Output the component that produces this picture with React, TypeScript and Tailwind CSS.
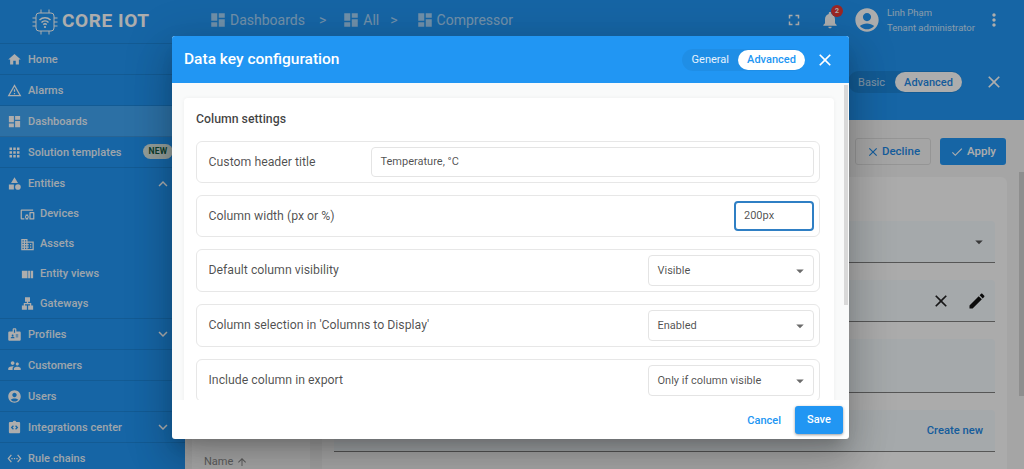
import React from "react";

const P = {
  home: "M10 20v-6h4v6h5v-8h3L12 3 2 12h3v8z",
  warn: "M12 5.99 19.53 19H4.47L12 5.99M12 2 1 21h22L12 2zm1 14h-2v2h2v-2zm0-6h-2v4h2v-4z",
  dash: "M3 13h8V3H3v10zm0 8h8v-6H3v6zm10 0h8V11h-8v10zm0-18v6h8V3h-8z",
  apps: "M4 8h4V4H4v4zm6 12h4v-4h-4v4zm-6 0h4v-4H4v4zm0-6h4v-4H4v4zm6 0h4v-4h-4v4zm6-10v4h4V4h-4zm-6 4h4V4h-4v4zm6 6h4v-4h-4v4zm0 6h4v-4h-4v4z",
  cat: "M12 2 6.5 11h11L12 2zM17.5 13a4.5 4.5 0 1 0 0 9 4.5 4.5 0 0 0 0-9zM3 13.5h8v8H3z",
  dev: "M3 6h18V4H3c-1.1 0-2 .9-2 2v12c0 1.1.9 2 2 2h4v-2H3V6zm10 6H9v1.78c-.61.55-1 1.33-1 2.22s.39 1.67 1 2.22V20h4v-1.78c.61-.55 1-1.34 1-2.22s-.39-1.67-1-2.22V12zm-2 5.5c-.83 0-1.5-.67-1.5-1.5s.67-1.5 1.5-1.5 1.5.67 1.5 1.5-.67 1.5-1.5 1.5zM22 8h-6c-.5 0-1 .5-1 1v10c0 .5.5 1 1 1h6c.5 0 1-.5 1-1V9c0-.5-.5-1-1-1zm-1 10h-4v-8h4v8z",
  dom: "M12 7V3H2v18h20V7H12zM6 19H4v-2h2v2zm0-4H4v-2h2v2zm0-4H4V9h2v2zm0-4H4V5h2v2zm4 12H8v-2h2v2zm0-4H8v-2h2v2zm0-4H8V9h2v2zm0-4H8V5h2v2zm10 12h-8v-2h2v-2h-2v-2h2v-2h-2V9h8v10zm-2-8h-2v2h2v-2zm0 4h-2v2h2v-2z",
  view: "M3 6h9v12H3zM13 6h3.5v12H13zM17.5 6H21v12h-3.5z",
  lan: "M13 22h8v-7h-3v-4h-5V9h3V2H8v7h3v2H6v4H3v7h8v-7H8v-2h8v2h-3z",
  badge: "M20 7h-5V4c0-1.1-.9-2-2-2h-2c-1.1 0-2 .9-2 2v3H4c-1.1 0-2 .9-2 2v11c0 1.1.9 2 2 2h16c1.1 0 2-.9 2-2V9c0-1.1-.9-2-2-2zM9 12c.83 0 1.5.67 1.5 1.5S9.83 15 9 15s-1.5-.67-1.5-1.5S8.17 12 9 12zm3 6H6v-.75c0-1 2-1.5 3-1.5s3 .5 3 1.5V18zm1-9h-2V4h2v5zm5 7.5h-4V15h4v1.5zm0-3h-4V12h4v1.5z",
  sup: "M16.5 12c1.38 0 2.49-1.12 2.49-2.5S17.88 7 16.5 7C15.12 7 14 8.12 14 9.5s1.12 2.5 2.5 2.5zM9 11c1.66 0 2.99-1.34 2.99-3S10.66 5 9 5C7.34 5 6 6.34 6 8s1.34 3 3 3zm7.5 3c-1.83 0-5.5.92-5.5 2.75V19h11v-2.25c0-1.83-3.67-2.75-5.5-2.75zM9 13c-2.33 0-7 1.17-7 3.5V19h7v-2.25c0-.85.33-2.34 2.37-3.47C10.5 13.1 9.66 13 9 13z",
  acc: "M12 2C6.48 2 2 6.48 2 12s4.48 10 10 10 10-4.48 10-10S17.52 2 12 2zm0 4c1.93 0 3.5 1.57 3.5 3.5S13.93 13 12 13s-3.5-1.57-3.5-3.5S10.07 6 12 6zm0 14c-2.03 0-4.43-.82-6.14-2.88C7.55 15.8 9.68 15 12 15s4.45.8 6.14 2.12C16.43 19.18 14.03 20 12 20z",
  integ: "M19 3h-4.18C14.4 1.84 13.3 1 12 1s-2.4.84-2.82 2H5c-1.1 0-2 .9-2 2v14c0 1.1.9 2 2 2h14c1.1 0 2-.9 2-2V5c0-1.1-.9-2-2-2zM11 14.17 9.59 15.59 6 12l3.59-3.59L11 9.83 8.83 12 11 14.17zm3.41 1.42L13 14.17 15.17 12 13 9.83l1.41-1.42L18 12l-3.59 3.59z",
  eth: "M7.77 6.76 6.23 5.48.82 12l5.41 6.52 1.54-1.28L3.42 12l4.35-5.24zM7 13h2v-2H7v2zm10-2h-2v2h2v-2zm-6 2h2v-2h-2v2zm6.77-7.52-1.54 1.28L20.58 12l-4.35 5.24 1.54 1.28L23.18 12l-5.41-6.52z",
  full: "M7 14H5v5h5v-2H7v-3zm-2-4h2V7h3V5H5v5zm12 7h-3v2h5v-5h-2v3zM14 5v2h3v3h2V5h-5z",
  bell: "M12 22c1.1 0 2-.9 2-2h-4c0 1.1.89 2 2 2zm6-6v-5c0-3.07-1.64-5.64-4.5-6.32V4c0-.83-.67-1.5-1.5-1.5s-1.5.67-1.5 1.5v.68C7.63 5.36 6 7.92 6 11v5l-2 2v1h16v-1l-2-2z",
  more: "M12 8c1.1 0 2-.9 2-2s-.9-2-2-2-2 .9-2 2 .9 2 2 2zm0 2c-1.1 0-2 .9-2 2s.9 2 2 2 2-.9 2-2-.9-2-2-2zm0 6c-1.1 0-2 .9-2 2s.9 2 2 2 2-.9 2-2-.9-2-2-2z",
  close: "M19 6.41 17.59 5 12 10.59 6.41 5 5 6.41 10.59 12 5 17.59 6.41 19 12 13.41 17.59 19 19 17.59 13.41 12z",
  check: "M9 16.17 4.83 12l-1.42 1.41L9 19 21 7l-1.41-1.41z",
  edit: "M3 17.25V21h3.75L17.81 9.94l-3.75-3.75L3 17.25zM20.71 7.04c.39-.39.39-1.02 0-1.41l-2.34-2.34c-.39-.39-1.02-.39-1.41 0l-1.83 1.83 3.75 3.75 1.83-1.83z",
  down: "M16.59 8.59 12 13.17 7.41 8.59 6 10l6 6 6-6z",
  up: "M12 8l-6 6 1.41 1.41L12 10.83l4.59 4.58L18 14z",
  arrowUp: "M4 12l1.41 1.41L11 7.83V20h2V7.83l5.58 5.59L20 12l-8-8-8 8z",
  caret: "M7 10l5 5 5-5z",
};

function Icon({ d, className = "" }: { d: string; className?: string }) {
  return (
    <svg viewBox="0 0 24 24" fill="currentColor" fillRule="evenodd" className={"shrink-0 " + className}>
      <path d={d} />
    </svg>
  );
}

function Logo() {
  return (
    <svg viewBox="0 0 28 28" fill="none" stroke="currentColor" strokeWidth="1" className="w-[28px] h-[28px] shrink-0">
      <rect x="5" y="5" width="18" height="18" rx="3" />
      <path d="M10 1.5V5M18 1.5V5M10 23v3.5M18 23v3.5M1.5 10H5M1.5 14H5M1.5 18H5M23 10h3.5M23 14h3.5M23 18h3.5" />
      <path strokeWidth="1.5" d="M8.5 12a8 8 0 0 1 11 0M10.5 14.5a5 5 0 0 1 7 0M12.3 16.6a2.5 2.5 0 0 1 3.4 0" />
      <circle cx="14" cy="19" r="1.1" fill="currentColor" stroke="none" />
    </svg>
  );
}

type Item = { label: string; d: string; sub?: boolean; chev?: "up" | "down"; active?: boolean; tag?: boolean };
const items: Item[] = [
  { label: "Home", d: P.home },
  { label: "Alarms", d: P.warn },
  { label: "Dashboards", d: P.dash, active: true },
  { label: "Solution templates", d: P.apps, tag: true },
  { label: "Entities", d: P.cat, chev: "up" },
  { label: "Devices", d: P.dev, sub: true },
  { label: "Assets", d: P.dom, sub: true },
  { label: "Entity views", d: P.view, sub: true },
  { label: "Gateways", d: P.lan, sub: true },
  { label: "Profiles", d: P.badge, chev: "down" },
  { label: "Customers", d: P.sup },
  { label: "Users", d: P.acc },
  { label: "Integrations center", d: P.integ, chev: "down" },
  { label: "Rule chains", d: P.eth },
];

function NavRow({ it, last }: { it: Item; last: boolean }) {
  const h = it.sub ? "h-[30px] pl-[20px] gap-[5px]" : "h-[31px] pl-[7px] gap-[6px]";
  const border = it.sub || it.label === "Entities" ? "" : "border-b border-[#000000]/10";
  const lastSub = it.label === "Gateways" ? "border-b border-[#000000]/10" : "";
  const textPad = it.sub ? "pt-[1px]" : "pt-[2px]";
  return (
    <div className={`relative flex items-center pr-[14px] shrink-0 ${h} ${last ? "" : border} ${lastSub} ${it.active ? "bg-[#ffffff]/15" : ""}`}>
      <Icon d={it.d} className="w-[15px] h-[15px]" />
      <span className={`text-[11px] font-medium tracking-[0.05px] whitespace-nowrap opacity-90 ${textPad}`}>{it.label}</span>
      {it.tag && (
        <span className="absolute left-[143px] top-[7px] h-[15px] w-[30px] rounded-full bg-[#dbe9e3] text-[#145c45] text-[8.5px] font-bold tracking-[0.3px] flex items-center justify-center">NEW</span>
      )}
      {it.chev && <Icon d={it.chev === "up" ? P.up : P.down} className="w-[18px] h-[18px] ml-auto mr-[-1px]" />}
    </div>
  );
}

function Sidebar() {
  return (
    <aside className="w-[185px] shrink-0 h-full bg-[#2196f3] text-[#ffffff] flex flex-col overflow-hidden">
      <div className="h-[44px] shrink-0 flex items-center pl-[31px] gap-[3px] border-b border-[#000000]/10">
        <Logo />
        <span className="text-[19px] font-bold tracking-[0.6px] whitespace-nowrap">CORE IOT</span>
      </div>
      {items.map((it, i) => (
        <NavRow key={it.label} it={it} last={i === items.length - 1} />
      ))}
    </aside>
  );
}

function Crumb({ label }: { label: string }) {
  return (
    <span className="flex items-center gap-[3px]">
      <Icon d={P.dash} className="w-[18px] h-[18px]" />
      <span className="text-[14px]">{label}</span>
    </span>
  );
}

function TopBar() {
  return (
    <header className="h-[40px] shrink-0 bg-[#2196f3] text-[#ffffff] flex items-center pl-[24px] pr-[20px]">
      <div className="flex items-center opacity-60">
        <Crumb label="Dashboards" />
        <span className="text-[14px] ml-[14px] mr-[16px]">&gt;</span>
        <Crumb label="All" />
        <span className="text-[14px] ml-[11px] mr-[18px]">&gt;</span>
        <Crumb label="Compressor" />
      </div>
      <div className="ml-auto flex items-center">
        <Icon d={P.full} className="w-[18px] h-[18px]" />
        <span className="relative ml-[17px]">
          <Icon d={P.bell} className="w-[20px] h-[20px]" />
          <span className="absolute -top-[5px] -right-[3px] w-[12px] h-[12px] rounded-full bg-[#e53935] text-[7px] font-bold flex items-center justify-center">2</span>
        </span>
        <Icon d={P.acc} className="w-[28px] h-[28px] ml-[13px]" />
        <div className="ml-[6px] w-[90px] leading-[15px]">
          <div className="text-[9.5px] opacity-75">Linh Phạm</div>
          <div className="text-[9.5px] opacity-75">Tenant administrator</div>
        </div>
        <Icon d={P.more} className="w-[20px] h-[20px] ml-[7px]" />
      </div>
    </header>
  );
}

function Field({ h, children }: { h: string; children?: React.ReactNode }) {
  return (
    <div className={`${h} bg-[#f3f9fd] border-b border-[#7f7f7f] rounded-t-[4px] flex items-center justify-end`}>
      {children}
    </div>
  );
}

function Editor() {
  return (
    <div className="flex-1 min-h-0 flex flex-col">
      <div className="h-[80px] shrink-0 bg-[#2196f3] text-[#ffffff] flex items-center justify-end pr-[20px] pt-[4px]">
        <div className="flex items-center rounded-full bg-[#000000]/10 h-[22px] pl-[10px]">
          <span className="text-[11px] opacity-70 mr-[10px] pt-[2px]">Basic</span>
          <span className="h-[20px] w-[67px] rounded-full bg-[#ffffff] text-[#1e88e5] text-[11px] font-medium flex items-center justify-center pt-[2px]">Advanced</span>
        </div>
        <Icon d={P.close} className="w-[20px] h-[20px] ml-[22px]" />
      </div>
      <div className="relative flex-1 min-h-0 bg-[#f4f4f4] flex flex-col">
        <div className="absolute right-0 top-[52px] w-[5px] h-[224px] bg-[#d2d2d2]" />
        <div className="h-[27px] mt-[18px] shrink-0 flex justify-end gap-[9px] pr-[18px]">
          <span className="w-[76px] rounded-[3px] border border-[#dcdcdc] text-[#1e88e5] text-[11.5px] font-medium flex items-center justify-center gap-[2px]">
            <Icon d={P.close} className="w-[14px] h-[14px]" />Decline
          </span>
          <span className="w-[66px] rounded-[3px] bg-[#2196f3] text-[#ffffff] text-[11.5px] font-medium flex items-center justify-center gap-[3px]">
            <Icon d={P.check} className="w-[14px] h-[14px]" />Apply
          </span>
        </div>
        <div className="flex-1 min-h-0 flex pl-[7px] pr-[17px] mt-[12px] gap-[12px]">
          <div className="w-[118px] bg-[#fcfcfc] rounded-t-[4px] flex flex-col justify-end pl-[12px]">
            <div className="flex items-center gap-[3px] text-[#8c8c8c] text-[11px] mb-[-1px]">
              Name
              <Icon d={P.arrowUp} className="w-[12px] h-[12px]" />
            </div>
          </div>
          <div className="flex-1 bg-[#fcfcfc] rounded-t-[6px] px-[12px] pt-[44px] flex flex-col">
            <Field h="h-[42px] mb-[17px] pr-[7px]">
              <Icon d={P.caret} className="w-[18px] h-[18px] text-[#555555]" />
            </Field>
            <Field h="h-[42px] mb-[17px] pr-[8px]">
              <Icon d={P.close} className="w-[20px] h-[20px] text-[#222222] mr-[16px]" />
              <Icon d={P.edit} className="w-[20px] h-[20px] text-[#111111]" />
            </Field>
            <Field h="h-[54px] mb-[17px]" />
            <Field h="h-[42px] pr-[12px]">
              <span className="text-[#1e88e5] text-[11.2px] font-medium pt-[2px]">Create new</span>
            </Field>
          </div>
        </div>
      </div>
    </div>
  );
}

function Row({ label, children }: { label: string; children: React.ReactNode }) {
  return (
    <div className="shrink-0 flex items-center justify-between pl-[11.5px] pr-[5px] border border-[#e7e7e7] rounded-[6px] py-[5px]">
      <span className="text-[12.3px] text-[#000000]/70 whitespace-nowrap">{label}</span>
      {children}
    </div>
  );
}

function Select({ value }: { value: string }) {
  return (
    <div className="w-[166px] h-[31px] border border-[#e4e4e4] rounded-[4px] flex items-center justify-between pl-[8.5px] pr-[4px] text-[11px] text-[#000000]/70">
      <span className="pt-[1px]">{value}</span>
      <Icon d={P.caret} className="w-[18px] h-[18px] text-[#6b6b6b]" />
    </div>
  );
}

function Dialog() {
  return (
    <div className="absolute left-[172px] top-[36px] w-[677px] h-[403px] bg-[#ffffff] rounded-[3px] shadow-[0_11px_15px_-7px_rgba(0,0,0,0.2),0_24px_38px_3px_rgba(0,0,0,0.14),0_9px_46px_8px_rgba(0,0,0,0.12)] flex flex-col overflow-hidden">
      <div className="h-[47px] shrink-0 bg-[#2196f3] text-[#ffffff] flex items-center pl-[12px] pr-[14px]">
        <h2 className="text-[15.5px] font-medium">Data key configuration</h2>
        <div className="ml-auto flex items-center h-[22px] rounded-full bg-[#000000]/5 pl-[10px] pt-[1px]">
          <span className="text-[11px] text-[#e6f2fd] mr-[9px]">General</span>
          <span className="h-[20px] w-[67px] rounded-full bg-[#ffffff] text-[#2196f3] text-[11px] font-medium flex items-center justify-center">Advanced</span>
        </div>
        <Icon d={P.close} className="w-[20px] h-[20px] ml-[10px]" />
      </div>
      <div className="relative h-[317px] shrink-0 bg-[#f9fafa] pl-[12px] pr-[15px] pt-[15px] overflow-hidden">
        <div className="absolute right-[1px] top-[2px] w-[4px] h-[220px] bg-[#d9d9d9]" />
        <div className="bg-[#ffffff] rounded-[4px] shadow-[0_0_4px_rgba(0,0,0,0.05)] pl-[12px] pr-[14px] pt-[13px] pb-[20px] flex flex-col gap-[12px]">
          <h3 className="text-[12.3px] font-medium text-[#000000]/75 leading-[16px] mb-[2px]">Column settings</h3>
          <Row label="Custom header title">
            <div className="w-[443px] h-[30px] border border-[#e4e4e4] rounded-[4px] flex items-center pl-[8.5px] text-[11px] text-[#000000]/70">Temperature, °C</div>
          </Row>
          <Row label="Column width (px or %)">
            <div className="w-[80px] h-[30px] border-2 border-[#2f7fc4] rounded-[4px] flex items-center pl-[8px] text-[11px] text-[#000000]/70">200px</div>
          </Row>
          <Row label="Default column visibility"><Select value="Visible" /></Row>
          <Row label="Column selection in 'Columns to Display'"><Select value="Enabled" /></Row>
          <Row label="Include column in export"><Select value="Only if column visible" /></Row>
        </div>
      </div>
      <div className="flex-1 flex items-center justify-end pr-[6px] gap-[14px]">
        <span className="text-[#2196f3] text-[11px] font-medium pt-[3px]">Cancel</span>
        <span className="w-[48px] h-[28px] rounded-[3px] bg-[#2196f3] text-[#ffffff] text-[11px] font-medium flex items-center justify-center pt-[2px] shadow-[0_1px_3px_rgba(0,0,0,0.4)]">Save</span>
      </div>
    </div>
  );
}

export default function App() {
  return (
    <div className="relative w-[1024px] h-[469px] overflow-hidden bg-[#ffffff] font-['Roboto',sans-serif]">
      <div className="flex h-full">
        <Sidebar />
        <main className="flex-1 min-w-0 flex flex-col">
          <TopBar />
          <Editor />
        </main>
      </div>
      <div className="absolute inset-0 bg-[#000000]/32" />
      <Dialog />
    </div>
  );
}
